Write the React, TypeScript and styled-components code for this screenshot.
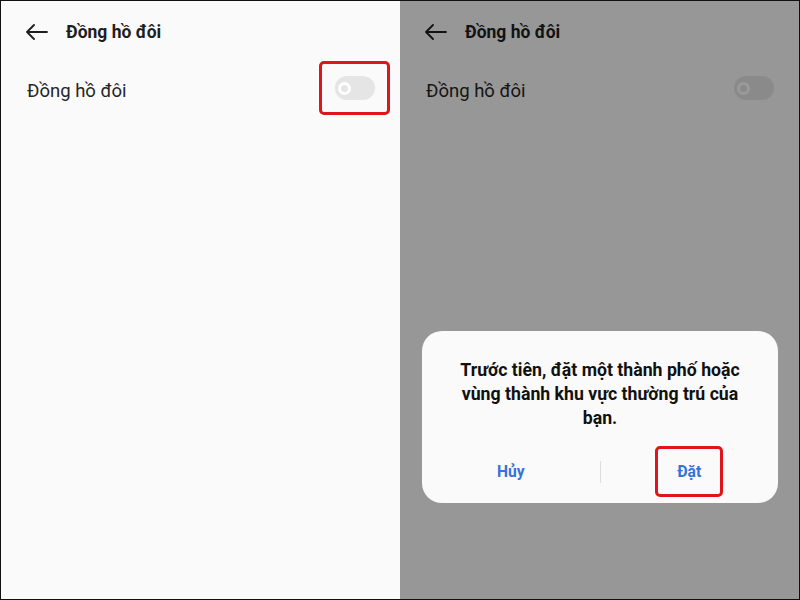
import React from "react";
import styled, { createGlobalStyle } from "styled-components";

const Global = createGlobalStyle`
  html, body { margin: 0; padding: 0; }
  body { font-family: Roboto, "Noto Sans", Arial, sans-serif; }
`;

const Frame = styled.div`
  width: 800px;
  height: 600px;
  box-sizing: border-box;
  border: 1px solid #111;
  display: grid;
  grid-template-columns: 399px 399px;
  overflow: hidden;
`;

const Panel = styled.div`
  position: relative;
  background: #fafafa;
  display: flex;
  flex-direction: column;
  overflow: hidden;
`;

const Header = styled.div`
  display: flex;
  align-items: center;
  height: 30px;
  margin-top: 16px;
  padding-left: 24px;
  gap: 18px;
`;

const Title = styled.div`
  font-size: 17.5px;
  font-weight: 700;
  color: #1e1e1e;
`;

const Row = styled.div`
  display: flex;
  align-items: center;
  justify-content: space-between;
  height: 54px;
  margin-top: 14px;
  padding: 0 10px 0 26px;
`;

const Label = styled.div`
  font-size: 18.5px;
  color: #262626;
  margin-top: 6px;
`;

const Highlight = styled.div<{ $show: boolean }>`
  width: 71px;
  height: 54px;
  box-sizing: border-box;
  border: 3px solid ${(p) => (p.$show ? "#e0141b" : "transparent")};
  border-radius: 5px;
  display: flex;
  align-items: center;
  justify-content: center;
`;

const Track = styled.div`
  width: 40px;
  height: 24px;
  border-radius: 12px;
  background: #e5e5e5;
  display: flex;
  align-items: center;
  padding-left: 3px;
  box-sizing: border-box;
`;

const Knob = styled.div`
  width: 13px;
  height: 13px;
  border-radius: 50%;
  border: 3px solid #fff;
  box-sizing: border-box;
`;

const Shade = styled.div`
  position: absolute;
  inset: 0;
  background: rgba(0, 0, 0, 0.395);
`;

const Dialog = styled.div`
  position: absolute;
  left: 22px;
  right: 21px;
  bottom: 96px;
  height: 172px;
  background: #fafafa;
  border-radius: 20px;
  display: flex;
  flex-direction: column;
  align-items: center;
`;

const Message = styled.div`
  margin-top: 27px;
  width: 292px;
  text-align: center;
  font-size: 17.7px;
  font-weight: 700;
  line-height: 24px;
  color: #111;
`;

const Actions = styled.div`
  margin-top: 16px;
  width: 100%;
  display: grid;
  grid-template-columns: 1fr 1px 1fr;
  align-items: center;
`;

const Divider = styled.div`
  height: 22px;
  background: #dcdcdc;
`;

const ActionCell = styled.div`
  display: flex;
  justify-content: center;
`;

const Action = styled.div<{ $boxed?: boolean }>`
  width: 68px;
  height: 51px;
  box-sizing: border-box;
  border: 3px solid ${(p) => (p.$boxed ? "#e0141b" : "transparent")};
  border-radius: 5px;
  display: flex;
  align-items: center;
  justify-content: center;
  font-size: 15.6px;
  font-weight: 700;
  color: #3474d6;
`;

const BackArrow = () => (
  <svg width="23" height="16" viewBox="0 0 23 16" fill="none">
    <path d="M22 8H2M9 1L2 8l7 7" stroke="#1e1e1e" strokeWidth="1.8" strokeLinecap="round" strokeLinejoin="round" />
  </svg>
);

const Screen = ({ highlight }: { highlight: boolean }) => (
  <>
    <Header>
      <BackArrow />
      <Title>Đồng hồ đôi</Title>
    </Header>
    <Row>
      <Label>Đồng hồ đôi</Label>
      <Highlight $show={highlight}>
        <Track>
          <Knob />
        </Track>
      </Highlight>
    </Row>
  </>
);

export default function App() {
  return (
    <>
      <Global />
      <Frame>
        <Panel>
          <Screen highlight />
        </Panel>
        <Panel>
          <Screen highlight={false} />
          <Shade />
          <Dialog>
            <Message>Trước tiên, đặt một thành phố hoặc vùng thành khu vực thường trú của bạn.</Message>
            <Actions>
              <ActionCell>
                <Action>Hủy</Action>
              </ActionCell>
              <Divider />
              <ActionCell>
                <Action $boxed>Đặt</Action>
              </ActionCell>
            </Actions>
          </Dialog>
        </Panel>
      </Frame>
    </>
  );
}
